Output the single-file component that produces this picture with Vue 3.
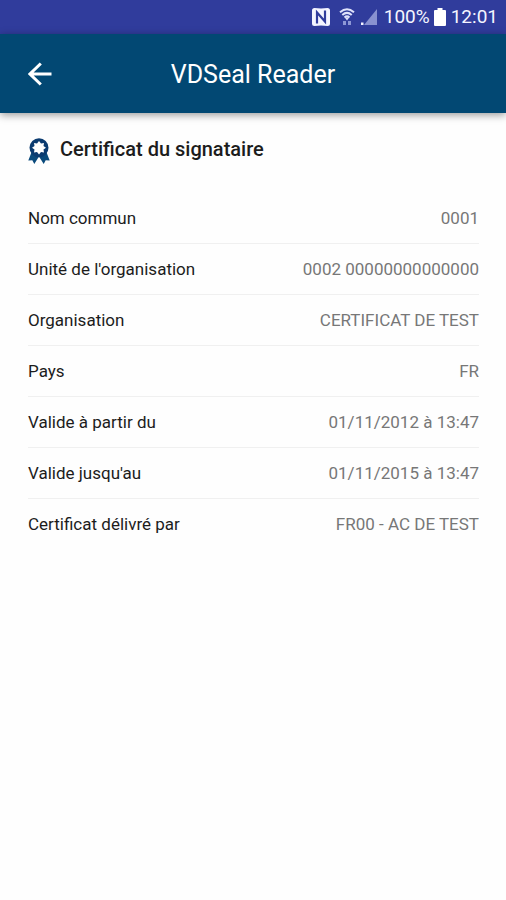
<script setup>
const rows = [
  { label: 'Nom commun', value: '0001' },
  { label: "Unité de l'organisation", value: '0002 00000000000000' },
  { label: 'Organisation', value: 'CERTIFICAT DE TEST' },
  { label: 'Pays', value: 'FR' },
  { label: 'Valide à partir du', value: '01/11/2012 à 13:47' },
  { label: "Valide jusqu'au", value: '01/11/2015 à 13:47' },
  { label: 'Certificat délivré par', value: 'FR00 - AC DE TEST' },
]
</script>

<template>
  <div class="screen">
    <div class="status">
      <svg class="nfc" width="18" height="18" viewBox="0 0 18 18" aria-hidden="true">
        <path d="M2.500 0Q9 .8 15.500 0Q18 0 18 2.500v13q0 2.500-2.500 2.500Q9 17.200 2.500 18Q0 18 0 15.500v-13Q0 0 2.500 0z" fill="#f4f5ff" />
        <path d="M5 15.500V4.500L13 13.500V2.500" fill="none" stroke="#303c9c" stroke-width="2.200" />
      </svg>
      <svg class="wifi" width="16" height="18" viewBox="0 0 16 18" aria-hidden="true">
        <g fill="none" stroke="#dfe2fa" stroke-width="2">
          <path d="M1 4.200Q8-1.800 15 4.200" />
          <path d="M3.300 7Q8 2.800 12.700 7" />
          <path d="M5.500 9.500Q8 7.300 10.500 9.500" />
        </g>
        <path d="M5.800 9.500h4.400L8 12.500z" fill="#dfe2fa" />
        <path d="M4 13h3v4H4zM9 13h3v4H9z" fill="#8e98d6" />
      </svg>
      <svg class="signal" width="18" height="18" viewBox="0 0 18 18" aria-hidden="true">
        <path d="M17 1v16H4z" fill="#8992d0" />
        <path d="M1 14.500h2.500V17H1z" fill="#f4f5ff" />
      </svg>
      <span class="percent">100%</span>
      <svg class="battery" width="12" height="18" viewBox="0 0 12 18" aria-hidden="true">
        <path d="M3.500 0h5v2H11q1 0 1 1v14q0 1-1 1H1q-1 0-1-1V3q0-1 1-1h2.500z" fill="#fff" />
      </svg>
      <time>12:01</time>
    </div>

    <header class="bar">
      <button class="back" type="button" aria-label="Retour">
        <svg width="24" height="24" viewBox="0 0 24 24" aria-hidden="true">
          <path d="M23.500 12H2M12.800 1.500L2 12l10.800 10.500" fill="none" stroke="#fff" stroke-width="3" />
        </svg>
      </button>
      <h1>VDSeal Reader</h1>
    </header>

    <main>
      <h2>
        <svg width="22" height="26" viewBox="0 0 22 26" aria-hidden="true">
          <path d="M4 13L.3 22.500l4-.3 2 3.800L11 18.500l4.700 7.500 2-3.800 4 .3L18 13z" fill="#0a4a7c" />
          <circle cx="11" cy="9.700" r="9.500" fill="#0b3b70" />
          <path d="M11 3l2 2.400 3-.5-.5 3 2.500 1.800-2.500 1.800.5 3-3-.5-2 2.400-2-2.400-3 .5.500-3L4 9.700l2.500-1.800-.5-3 3 .5z" fill="#fff" />
        </svg>
        Certificat du signataire
      </h2>
      <dl>
        <div v-for="row in rows" :key="row.label" class="row">
          <dt>{{ row.label }}</dt>
          <dd>{{ row.value }}</dd>
        </div>
      </dl>
    </main>
  </div>
</template>

<style>
body {
  background: #fefefe;
}
</style>

<style scoped>
.screen {
  font-family: Roboto, sans-serif;
  color: #1c1c1c;
}
.status {
  display: flex;
  align-items: center;
  justify-content: flex-end;
  height: 34px;
  padding-right: 8px;
  background: #303c9c;
  color: #f4f5ff;
  font-size: 19px;
  line-height: 34px;
}
.wifi {
  margin-left: 9px;
}
.signal {
  margin-left: 5px;
}
.percent {
  margin-left: 6px;
}
.battery {
  margin: 0 5px 0 4px;
}
.bar {
  display: grid;
  grid-template-columns: 80px 1fr 80px;
  align-items: center;
  height: 79px;
  background: #024873;
  color: #fff;
  box-shadow: 0 2px 8px rgba(0, 0, 0, 0.4);
}
.back {
  display: flex;
  justify-self: center;
  padding: 0;
  border: 0;
  background: none;
  cursor: pointer;
}
h1 {
  margin: 0;
  padding-top: 2px;
  font-size: 25px;
  font-weight: 400;
  line-height: 32px;
  text-align: center;
}
main {
  padding: 21px 27px 21px 28px;
}
h2 {
  display: flex;
  align-items: center;
  gap: 10px;
  margin: 0 0 29px;
  font-size: 20px;
  font-weight: 500;
  line-height: 28px;
}
h2 svg {
  margin-top: 4px;
}
dl {
  margin: 0;
}
.row {
  display: flex;
  justify-content: space-between;
  gap: 16px;
  padding: 13px 0;
  border-bottom: 1px solid #f0f0f0;
  font-size: 17px;
  line-height: 24px;
}
.row:last-child {
  border-bottom: 0;
}
dd {
  margin: 0;
  color: #777;
  text-align: right;
}
</style>
